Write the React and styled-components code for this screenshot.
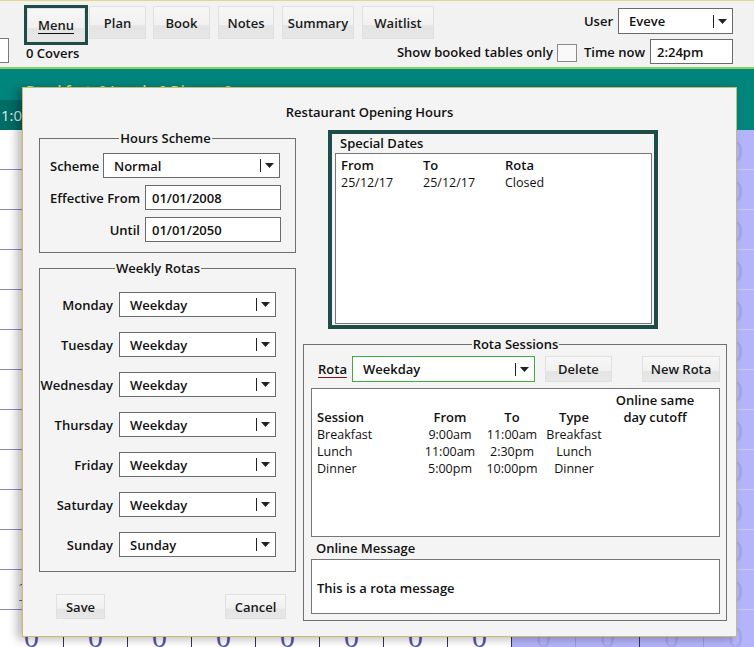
import React from 'react';
import styled, { createGlobalStyle } from 'styled-components';

const Global = createGlobalStyle`
  html, body { margin: 0; padding: 0; background: #fff; }
  body { font-family: "Open Sans", "Noto Sans", sans-serif; color: #111; font-size: 13px; }
  * { box-sizing: border-box; }
`;

const Screen = styled.div`
  position: relative;
  width: 754px;
  height: 647px;
  overflow: hidden;
  display: flex;
  flex-direction: column;
  background: #fff;
`;

/* ---------- toolbar ---------- */
const Toolbar = styled.header`
  flex: none;
  height: 69px;
  display: grid;
  grid-template-columns: 9px 15px 1fr 21px;
  grid-template-rows: 1fr;
  background: #f2f2f2;
  border-top: 1px solid #e2d68a;
  border-bottom: 2px solid #8fcf62;
`;

const StubField = styled.div`
  grid-column: 1;
  grid-row: 1;
  width: 9px;
  height: 25px;
  margin-top: 37px;
  background: #fff;
  border: 1px solid #7a7a7a;
  border-left: none;
`;

const NavBlock = styled.div`
  grid-column: 3;
  grid-row: 1;
  justify-self: start;
  padding-top: 4px;
  display: flex;
  flex-direction: column;
`;

const NavRow = styled.div`
  display: flex;
  align-items: flex-start;
`;

const FocusRing = styled.div`
  display: flex;
  border: 3px solid #1e4c49;
`;

const Btn = styled.button`
  flex: none;
  width: ${p => p.$w}px;
  height: ${p => p.$h || 26}px;
  margin: ${p => p.$mt || 0}px 0 0 ${p => p.$ml || 0}px;
  padding: 0;
  border: 1px solid #e0e0e0;
  border-radius: 0;
  background: linear-gradient(#f7f7f7 0%, #f1f1f1 58%, #e4e4e4 60%, #e7e7e7 100%);
  font: 600 13px "Open Sans", "Noto Sans", sans-serif;
  color: #1a1a1a;
  cursor: default;
`;

const PushRight = styled.div`
  margin-left: auto;
  display: flex;
`;

const Underlined = styled.span`
  text-decoration: underline;
  text-decoration-color: ${p => p.$color || '#111'};
  text-underline-offset: 3px;
`;

const Covers = styled.div`
  margin-left: 2px;
  font-weight: 600;
  line-height: 17px;
`;

const UserBlock = styled.div`
  grid-column: 3;
  grid-row: 1;
  justify-self: end;
  padding-top: 7px;
  display: flex;
  flex-direction: column;
  align-items: flex-end;
`;

const UserRow = styled.div`
  display: flex;
  align-items: center;
  height: ${p => p.$h}px;
  margin-top: ${p => p.$mt || 0}px;
`;

const Label = styled.span`
  font-weight: 600;
  white-space: nowrap;
  margin-left: ${p => p.$ml || 0}px;
  margin-right: ${p => p.$mr || 0}px;
`;

const Check = styled.span`
  flex: none;
  width: 20px;
  height: 18px;
  margin: 3px 0 0 4px;
  background: #f9f9f9;
  border: 1px solid #8a8a8a;
`;

/* ---------- inputs ---------- */
const SelectBox = styled.div`
  flex: none;
  display: flex;
  align-items: center;
  width: ${p => p.$w}px;
  height: ${p => p.$h || 25}px;
  margin-left: ${p => p.$ml || 0}px;
  padding-left: ${p => p.$pl || 10}px;
  background: #fff;
  border: 1px solid ${p => (p.$focus ? '#3fae3f' : '#6b6b6b')};
  font-weight: 600;
`;

const SelectValue = styled.span`
  flex: 1;
  white-space: nowrap;
`;

const CaretLine = styled.span`
  width: 1px;
  height: 13px;
  background: #222;
`;

const CaretArrow = styled.svg`
  margin: 0 5px 0 4px;
`;

const Dropdown = ({ value, w, h, ml, pl, focus }) => (
  <SelectBox $w={w} $h={h} $ml={ml} $pl={pl} $focus={focus}>
    <SelectValue>{value}</SelectValue>
    <CaretLine />
    <CaretArrow width="9" height="5" viewBox="0 0 9 5">
      <path d="M0 0 H9 L4.5 5 Z" fill="#222" />
    </CaretArrow>
  </SelectBox>
);

const Field = styled.div`
  flex: none;
  display: flex;
  align-items: center;
  width: ${p => p.$w}px;
  height: ${p => p.$h || 25}px;
  margin-left: ${p => p.$ml || 0}px;
  padding-left: 6px;
  background: #fff;
  border: 1px solid #6b6b6b;
  font-weight: 600;
`;

/* ---------- background floor ---------- */
const TealBand = styled.div`
  flex: none;
  height: 61px;
  background: #00857d;
  display: flex;
  flex-direction: column;
`;

const InfoLine = styled.div`
  height: 31px;
  padding: 12px 0 0 26px;
  color: #d5e37a;
  font-size: 14px;
  font-weight: 600;
  white-space: nowrap;
`;

const TimeRow = styled.div`
  height: 30px;
  display: flex;
`;

const TimeCell = styled.div`
  width: 64px;
  flex: none;
  background: ${p => (p.$dark ? '#006c66' : 'transparent')};
  color: #dcefeb;
  font-size: 15px;
  line-height: 30px;
  padding-left: 1px;
`;

const Floor = styled.div`
  flex: 1;
  display: flex;
  flex-direction: column;
`;

const FloorRow = styled.div`
  flex: none;
  display: flex;
  height: 40px;
`;

const FloorCell = styled.div`
  flex: none;
  width: 64px;
  height: 40px;
  overflow: hidden;
  padding-top: ${p => p.$pt}px;
  text-align: center;
  font-family: "Liberation Serif", "DejaVu Serif", serif;
  font-size: 30px;
  line-height: 30px;
  background: ${p => (p.$lav ? '#b4b4fa' : '#fff')};
  color: ${p => (p.$lav ? '#a4a4ec' : '#5656a8')};
  border-bottom: 1px solid ${p => (p.$lav ? '#cbcbfb' : '#8a8ac2')};
  border-right: 1px solid ${p => (p.$lav && !p.$dark ? '#9c9ce2' : '#33335a')};
`;

/* ---------- dialog ---------- */
const Dialog = styled.section`
  position: absolute;
  left: 22px;
  top: 87px;
  width: 715px;
  height: 550px;
  background: #f4f4f4;
  border: 1px solid #cbbb72;
  box-shadow: -5px 2px 9px rgba(0, 0, 0, 0.28);
  display: flex;
  flex-direction: column;
`;

const Title = styled.h1`
  margin: 0 0 9px;
  padding: 15px 20px 0 0;
  font-size: 13px;
  font-weight: 600;
  line-height: 18px;
  text-align: center;
`;

const Body = styled.div`
  display: flex;
  padding-left: 16px;
`;

const LeftCol = styled.div`
  flex: none;
  width: 257px;
  display: flex;
  flex-direction: column;
`;

const RightCol = styled.div`
  flex: none;
  width: 424px;
  margin-left: 7px;
  display: flex;
  flex-direction: column;
`;

const Group = styled.fieldset`
  margin: ${p => p.$mt || 0}px 0 0;
  min-width: 0;
  padding: ${p => p.$pad};
  border: 1px solid #6f6f6f;
`;

const Legend = styled.legend`
  margin: 0 auto;
  padding: 0 1px;
  font-weight: 600;
  line-height: 16px;
`;

const FormRow = styled.div`
  display: flex;
  align-items: center;
  margin-top: ${p => p.$mt || 0}px;
`;

const RowLabel = styled.span`
  flex: none;
  width: ${p => p.$w}px;
  margin-right: 5px;
  text-align: ${p => p.$align || 'left'};
  font-weight: 600;
  white-space: nowrap;
`;

const RotaGrid = styled.div`
  display: grid;
  grid-template-columns: 73px 157px;
  column-gap: 6px;
  row-gap: 15px;
  align-items: center;
`;

const DayLabel = styled.span`
  text-align: right;
  font-weight: 600;
`;

const ButtonRow = styled.div`
  display: flex;
  justify-content: space-between;
  margin-top: 22px;
  padding: 0 10px 0 17px;
`;

const SpecialFrame = styled.div`
  margin-left: 25px;
  width: 330px;
  height: 199px;
  border: 4px solid #1e4c49;
  padding: 0 2px 1px 3px;
  display: flex;
  flex-direction: column;
`;

const FrameHeader = styled.div`
  height: 19px;
  line-height: 19px;
  padding-left: 5px;
  font-weight: 600;
`;

const ListBox = styled.div`
  flex: ${p => (p.$h ? 'none' : 1)};
  height: ${p => (p.$h ? `${p.$h}px` : 'auto')};
  margin-top: ${p => p.$mt || 0}px;
  background: #fff;
  border: 1px solid #777;
  padding: ${p => p.$pad || '3px 5px'};
`;

const DateGrid = styled.div`
  display: grid;
  grid-template-columns: 82px 82px 1fr;
  line-height: 17px;
`;

const Cell = styled.span`
  font-weight: ${p => (p.$head ? 600 : 400)};
  font-size: ${p => (p.$head ? 13 : 12.5)}px;
  text-align: ${p => p.$align || 'left'};
  align-self: end;
  white-space: nowrap;
`;

const SessionGrid = styled.div`
  display: grid;
  grid-template-columns: 102px 62px 62px 62px 100px;
  line-height: 17px;
`;

const MessageLabel = styled.div`
  height: 22px;
  line-height: 22px;
  padding-left: 5px;
  font-weight: 600;
`;

const MessageBox = styled.div`
  height: 55px;
  display: flex;
  align-items: center;
  padding: 2px 0 0 5px;
  background: #fff;
  border: 1px solid #777;
  font-weight: 600;
`;

const days = [
  ['Monday', 'Weekday'],
  ['Tuesday', 'Weekday'],
  ['Wednesday', 'Weekday'],
  ['Thursday', 'Weekday'],
  ['Friday', 'Weekday'],
  ['Saturday', 'Weekday'],
  ['Sunday', 'Sunday'],
];

const sessions = [
  ['Breakfast', '9:00am', '11:00am', 'Breakfast'],
  ['Lunch', '11:00am', '2:30pm', 'Lunch'],
  ['Dinner', '5:00pm', '10:00pm', 'Dinner'],
];

const rows = Array.from({ length: 13 }, (_, r) => r);
const cols = Array.from({ length: 12 }, (_, c) => c);

// Only cells that peek out from behind the dialog carry a visible count.
const cellCount = (r, c) => {
  if (r === 11 && c === 0) return '10';
  if (r === 12 || c === 11) return '0';
  return null;
};

export default function App() {
  return (
    <>
      <Global />
      <Screen>
        <Toolbar>
          <StubField />
          <NavBlock>
            <NavRow>
              <FocusRing>
                <Btn $w={58} $h={34}>
                  <Underlined>Menu</Underlined>
                </Btn>
              </FocusRing>
              <Btn $w={57} $h={33} $ml={1} $mt={1}>Plan</Btn>
              <Btn $w={57} $h={33} $ml={7} $mt={1}>Book</Btn>
              <Btn $w={56} $h={33} $ml={8} $mt={1}>Notes</Btn>
              <Btn $w={72} $h={33} $ml={8} $mt={1}>Summary</Btn>
              <Btn $w={72} $h={33} $ml={8} $mt={1}>Waitlist</Btn>
            </NavRow>
            <Covers>0 Covers</Covers>
          </NavBlock>
          <UserBlock>
            <UserRow $h={26}>
              <Label $mr={5}>User</Label>
              <Dropdown value="Eveve" w={115} h={26} pl={10} />
            </UserRow>
            <UserRow $h={25} $mt={5}>
              <Label>Show booked tables only</Label>
              <Check />
              <Label $ml={7}>Time now</Label>
              <Field $w={83} $ml={5}>2:24pm</Field>
            </UserRow>
          </UserBlock>
        </Toolbar>

        <TealBand>
          <InfoLine>Breakfast: 0 Lunch: 0 Dinner: 0</InfoLine>
          <TimeRow>
            <TimeCell $dark>1:00</TimeCell>
          </TimeRow>
        </TealBand>

        <Floor>
          {rows.map(r => (
            <FloorRow key={r}>
              {cols.map(c => (
                <FloorCell key={c} $pt={r === 12 ? 12 : 6} $lav={c >= 8} $dark={c % 2 === 1}>
                  {cellCount(r, c)}
                </FloorCell>
              ))}
            </FloorRow>
          ))}
        </Floor>

        <Dialog>
          <Title>Restaurant Opening Hours</Title>
          <Body>
            <LeftCol>
              <Group $pad="7px 14px 10px 10px">
                <Legend>Hours Scheme</Legend>
                <FormRow>
                  <RowLabel $w={48}>Scheme</RowLabel>
                  <Dropdown value="Normal" w={177} h={25} />
                </FormRow>
                <FormRow $mt={7}>
                  <RowLabel $w={90} $align="right">Effective From</RowLabel>
                  <Field $w={136}>01/01/2008</Field>
                </FormRow>
                <FormRow $mt={7}>
                  <RowLabel $w={90} $align="right">Until</RowLabel>
                  <Field $w={136}>01/01/2050</Field>
                </FormRow>
              </Group>

              <Group $mt={7} $pad="16px 19px 14px 0">
                <Legend>Weekly Rotas</Legend>
                <RotaGrid>
                  {days.map(([day, rota]) => (
                    <React.Fragment key={day}>
                      <DayLabel>{day}</DayLabel>
                      <Dropdown value={rota} w={157} h={25} />
                    </React.Fragment>
                  ))}
                </RotaGrid>
              </Group>

              <ButtonRow>
                <Btn $w={49} $h={25}>Save</Btn>
                <Btn $w={61} $h={25}>Cancel</Btn>
              </ButtonRow>
            </LeftCol>

            <RightCol>
              <SpecialFrame>
                <FrameHeader>Special Dates</FrameHeader>
                <ListBox>
                  <DateGrid>
                    <Cell $head>From</Cell>
                    <Cell $head>To</Cell>
                    <Cell $head>Rota</Cell>
                    <Cell>25/12/17</Cell>
                    <Cell>25/12/17</Cell>
                    <Cell>Closed</Cell>
                  </DateGrid>
                </ListBox>
              </SpecialFrame>

              <Group $mt={7} $pad="4px 6px 6px 7px">
                <Legend>Rota Sessions</Legend>
                <FormRow>
                  <Label $ml={7} $mr={5}>
                    <Underlined $color="#8a1414">Rota</Underlined>
                  </Label>
                  <Dropdown value="Weekday" w={183} h={26} focus />
                  <Btn $w={67} $h={26} $ml={10}>Delete</Btn>
                  <PushRight>
                    <Btn $w={78} $h={26}>New Rota</Btn>
                  </PushRight>
                </FormRow>
                <ListBox $h={149} $mt={6} $pad="3px 0 0 5px">
                  <SessionGrid>
                    <Cell $head>Session</Cell>
                    <Cell $head $align="center">From</Cell>
                    <Cell $head $align="center">To</Cell>
                    <Cell $head $align="center">Type</Cell>
                    <Cell $head $align="center">
                      Online same
                      <br />
                      day cutoff
                    </Cell>
                    {sessions.map(s => (
                      <React.Fragment key={s[0]}>
                        <Cell>{s[0]}</Cell>
                        <Cell $align="center">{s[1]}</Cell>
                        <Cell $align="center">{s[2]}</Cell>
                        <Cell $align="center">{s[3]}</Cell>
                        <Cell />
                      </React.Fragment>
                    ))}
                  </SessionGrid>
                </ListBox>
                <MessageLabel>Online Message</MessageLabel>
                <MessageBox>This is a rota message</MessageBox>
              </Group>
            </RightCol>
          </Body>
        </Dialog>
      </Screen>
    </>
  );
}
